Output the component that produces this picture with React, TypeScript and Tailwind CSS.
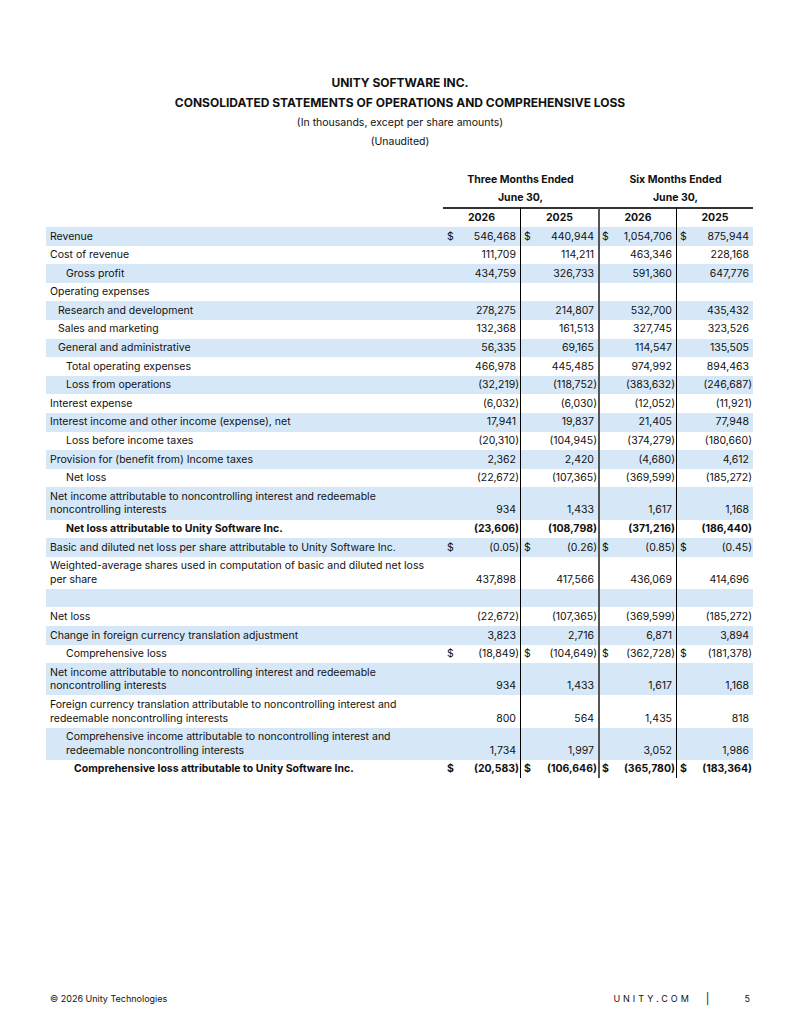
import React from "react";

type Row = {
  label: string;
  indent?: number;
  bold?: boolean;
  two?: boolean;
  dollar?: boolean;
  vals?: string[];
};

const rows: Row[] = [
  { label: "Revenue", dollar: true, vals: ["546,468", "440,944", "1,054,706", "875,944"] },
  { label: "Cost of revenue", vals: ["111,709", "114,211", "463,346", "228,168"] },
  { label: "Gross profit", indent: 16, vals: ["434,759", "326,733", "591,360", "647,776"] },
  { label: "Operating expenses" },
  { label: "Research and development", indent: 8, vals: ["278,275", "214,807", "532,700", "435,432"] },
  { label: "Sales and marketing", indent: 8, vals: ["132,368", "161,513", "327,745", "323,526"] },
  { label: "General and administrative", indent: 8, vals: ["56,335", "69,165", "114,547", "135,505"] },
  { label: "Total operating expenses", indent: 16, vals: ["466,978", "445,485", "974,992", "894,463"] },
  { label: "Loss from operations", indent: 16, vals: ["(32,219)", "(118,752)", "(383,632)", "(246,687)"] },
  { label: "Interest expense", vals: ["(6,032)", "(6,030)", "(12,052)", "(11,921)"] },
  { label: "Interest income and other income (expense), net", vals: ["17,941", "19,837", "21,405", "77,948"] },
  { label: "Loss before income taxes", indent: 16, vals: ["(20,310)", "(104,945)", "(374,279)", "(180,660)"] },
  { label: "Provision for (benefit from) Income taxes", vals: ["2,362", "2,420", "(4,680)", "4,612"] },
  { label: "Net loss", indent: 16, vals: ["(22,672)", "(107,365)", "(369,599)", "(185,272)"] },
  {
    label: "Net income attributable to noncontrolling interest and redeemable noncontrolling interests",
    two: true,
    vals: ["934", "1,433", "1,617", "1,168"],
  },
  { label: "Net loss attributable to Unity Software Inc.", indent: 16, bold: true, vals: ["(23,606)", "(108,798)", "(371,216)", "(186,440)"] },
  { label: "Basic and diluted net loss per share attributable to Unity Software Inc.", dollar: true, vals: ["(0.05)", "(0.26)", "(0.85)", "(0.45)"] },
  {
    label: "Weighted-average shares used in computation of basic and diluted net loss per share",
    two: true,
    vals: ["437,898", "417,566", "436,069", "414,696"],
  },
  { label: "" },
  { label: "Net loss", vals: ["(22,672)", "(107,365)", "(369,599)", "(185,272)"] },
  { label: "Change in foreign currency translation adjustment", vals: ["3,823", "2,716", "6,871", "3,894"] },
  { label: "Comprehensive loss", indent: 16, dollar: true, vals: ["(18,849)", "(104,649)", "(362,728)", "(181,378)"] },
  {
    label: "Net income attributable to noncontrolling interest and redeemable noncontrolling interests",
    two: true,
    vals: ["934", "1,433", "1,617", "1,168"],
  },
  {
    label: "Foreign currency translation attributable to noncontrolling interest and redeemable noncontrolling interests",
    two: true,
    vals: ["800", "564", "1,435", "818"],
  },
  {
    label: "Comprehensive income attributable to noncontrolling interest and redeemable noncontrolling interests",
    indent: 16,
    two: true,
    vals: ["1,734", "1,997", "3,052", "1,986"],
  },
  { label: "Comprehensive loss attributable to Unity Software Inc.", indent: 24, bold: true, dollar: true, vals: ["(20,583)", "(106,646)", "(365,780)", "(183,364)"] },
];

const borderClasses = [
  "",
  "border-l border-black",
  "border-l-2 border-[#555]",
  "border-l border-black",
];
const padL = ["pl-[4px]", "pl-[3px]", "pl-[2px]", "pl-[3px]"];

function NumCell({ v, i, dollar, bold }: { v?: string; i: number; dollar?: boolean; bold?: boolean }) {
  const neg = v ? v.startsWith("(") : false;
  return (
    <div
      className={`flex items-end justify-between py-[2.5px] ${borderClasses[i]} ${padL[i]} ${neg ? "pr-[1px]" : "pr-[4px]"} ${bold ? "font-bold" : ""}`}
    >
      <span>{dollar && v ? "$" : ""}</span>
      <span>{v ?? ""}</span>
    </div>
  );
}

export default function App() {
  return (
    <div
      className="w-[800px] h-[1035px] bg-white text-[#111] flex flex-col"
      style={{ fontFamily: "Inter, 'Liberation Sans', sans-serif" }}
    >
      <div className="pt-[73px] text-center">
        <div className="text-[12px] font-bold leading-[20px]">UNITY SOFTWARE INC.</div>
        <div className="text-[12px] font-bold leading-[20px]">CONSOLIDATED STATEMENTS OF OPERATIONS AND COMPREHENSIVE LOSS</div>
        <div className="text-[10.5px] leading-[20px]">(In thousands, except per share amounts)</div>
        <div className="text-[10.5px] leading-[18px]">(Unaudited)</div>
      </div>

      <div className="ml-[46px] mt-[20px] w-[707px] text-[10.5px]">
        <div className="grid grid-cols-[397px_155px_155px] font-bold leading-[18px]">
          <div />
          <div className="text-center">Three Months Ended</div>
          <div className="text-center">Six Months Ended</div>
          <div />
          <div className="text-center">June 30,</div>
          <div className="text-center">June 30,</div>
        </div>
        <div className="grid grid-cols-[397px_77px_78px_78px_77px] font-bold">
          <div />
          <div className="border-t-2 border-[#333] text-center leading-[14px] py-[2px]">2026</div>
          <div className="border-t-2 border-[#333] border-l border-l-black text-center leading-[14px] py-[2px]">2025</div>
          <div className="border-t-2 border-[#333] border-l-2 border-l-[#555] text-center leading-[14px] py-[2px]">2026</div>
          <div className="border-t-2 border-[#333] border-l border-l-black text-center leading-[14px] py-[2px]">2025</div>
        </div>
        {rows.map((r, idx) => (
          <div
            key={idx}
            className={`grid grid-cols-[397px_77px_78px_78px_77px] leading-[13.6px] ${idx % 2 === 0 ? "bg-[#d6e8f8]" : "bg-white"}`}
          >
            <div
              className={`py-[2.5px] pr-[8px] ${r.bold ? "font-bold" : ""} ${r.two ? "min-h-[32px]" : "min-h-[18.6px]"}`}
              style={{ paddingLeft: 4 + (r.indent ?? 0) }}
            >
              {r.label}
            </div>
            {[0, 1, 2, 3].map((i) => (
              <NumCell key={i} v={r.vals?.[i]} i={i} dollar={r.dollar} bold={r.bold} />
            ))}
          </div>
        ))}
      </div>

      <div className="mt-auto pb-[30px] px-[50px] flex items-center justify-between text-[9px] leading-[12px]">
        <div>© 2026 Unity Technologies</div>
        <div className="flex items-center">
          <span className="tracking-[3px]">UNITY.COM</span>
          <span className="ml-[14px] text-[11px]">|</span>
          <span className="ml-[35px]">5</span>
        </div>
      </div>
    </div>
  );
}
